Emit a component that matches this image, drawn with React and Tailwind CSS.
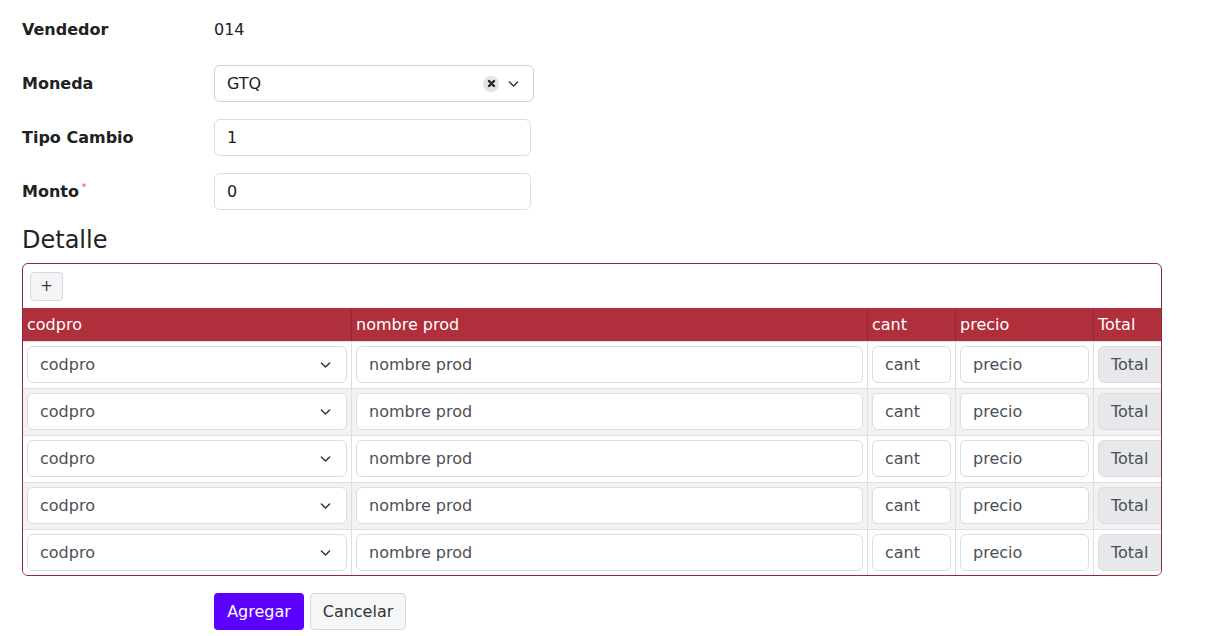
import React from "react";

const cols = [
  { key: "codpro", label: "codpro", w: "w-[328px]", type: "select" },
  { key: "nombre", label: "nombre prod", w: "w-[516px]", type: "input" },
  { key: "cant", label: "cant", w: "w-[88px]", type: "input" },
  { key: "precio", label: "precio", w: "w-[138px]", type: "input" },
  { key: "total", label: "Total", w: "w-[90px]", type: "readonly" },
];

function Chevron({ className }) {
  return (
    <svg viewBox="0 0 12 8" className={className} fill="none" stroke="currentColor" strokeWidth="1.6" strokeLinecap="round" strokeLinejoin="round">
      <path d="M1.5 1.8 6 6.2l4.5-4.4" />
    </svg>
  );
}

function FormRow({ label, required, children }) {
  return (
    <div className="flex items-center h-[37px] mb-[17px]">
      <div className="w-[192px] font-bold text-[16px] text-[#212121]">
        {label}
        {required && <span className="text-[#e57373] text-[8px] align-top ml-[3px] relative top-[2px]">*</span>}
      </div>
      {children}
    </div>
  );
}

function Cell({ col }) {
  const base = "h-[37px] w-full rounded-[6px] border border-[#dcdce0] px-[12px] text-[16px] flex items-center";
  if (col.type === "select") {
    return (
      <div className={base + " bg-white text-[#4b4f56] justify-between"}>
        <span>codpro</span>
        <Chevron className="w-[11px] h-[8px] text-[#333] mr-[3px]" />
      </div>
    );
  }
  if (col.type === "readonly") {
    return <div className={base + " bg-[#e7e8ec] text-[#4b4f56]"}>Total</div>;
  }
  return (
    <input
      placeholder={col.label}
      className={base + " bg-white outline-none placeholder:text-[#4b4f56] font-['DejaVu_Sans']"}
    />
  );
}

export default function App() {
  const rows = [0, 1, 2, 3, 4];
  return (
    <div className="px-[22px] pt-[11px] font-['DejaVu_Sans',sans-serif] text-[#212121] bg-white min-h-screen">
      <FormRow label="Vendedor">
        <span className="text-[16px]">014</span>
      </FormRow>
      <FormRow label="Moneda">
        <div className="w-[320px] h-[37px] rounded-[6px] border border-[#cfcfd6] flex items-center pl-[12px] pr-[14px]">
          <span className="flex-1 text-[16px]">GTQ</span>
          <span className="w-[16px] h-[16px] rounded-full bg-[#e3e3e3] flex items-center justify-center mr-[9px]">
            <svg viewBox="0 0 10 10" className="w-[9px] h-[9px]" stroke="#222" strokeWidth="2.6" strokeLinecap="round">
              <path d="M2.2 2.2l5.6 5.6M7.8 2.2 2.2 7.8" />
            </svg>
          </span>
          <Chevron className="w-[11px] h-[8px] text-[#333]" />
        </div>
      </FormRow>
      <FormRow label="Tipo Cambio">
        <input defaultValue="1" className="w-[317px] h-[37px] rounded-[6px] border border-[#dcdce0] px-[12px] text-[16px] outline-none font-['DejaVu_Sans']" />
      </FormRow>
      <FormRow label="Monto" required>
        <input defaultValue="0" className="w-[317px] h-[37px] rounded-[6px] border border-[#dcdce0] px-[12px] text-[16px] outline-none font-['DejaVu_Sans']" />
      </FormRow>

      <h2 className="text-[24px] leading-[29px] mt-[-1px] mb-[8px] text-[#222]">Detalle</h2>

      <div className="w-[1140px] border border-[#8c2a3a] rounded-[6px] overflow-hidden">
        <div className="h-[44px] flex items-center px-[7px]">
          <button className="w-[33px] h-[29px] rounded-[4px] border border-[#d6d8dc] bg-[#f4f5f7] text-[15px] text-[#333] flex items-center justify-center">+</button>
        </div>
        <div className="w-[1160px] flex h-[33px] bg-[#b02f3c] text-white text-[16px]">
          {cols.map((c, i) => (
            <div key={c.key} className={c.w + " flex items-center px-[4px] " + (i > 0 ? "border-l border-[#9a2533]" : "")}>
              {c.label}
            </div>
          ))}
        </div>
        {rows.map((r) => (
          <div key={r} className={"w-[1160px] flex border-t border-[#dfdfdf] " + (r % 2 === 1 ? "bg-[#f2f2f2]" : "bg-white")}>
            {cols.map((c, i) => (
              <div key={c.key} className={c.w + " pt-[4px] px-[4px] " + (r === 4 ? "pb-[4px] " : "pb-[5px] ") + (i > 0 ? "border-l border-[#dfdfdf]" : "")}>
                <Cell col={c} />
              </div>
            ))}
          </div>
        ))}
      </div>

      <div className="flex gap-[6px] mt-[17px] ml-[192px]">
        <button className="w-[90px] h-[37px] rounded-[4px] bg-[#5b00ff] text-white text-[16px]">Agregar</button>
        <button className="w-[96px] h-[37px] rounded-[4px] border border-[#d6d8dc] bg-[#f5f6f8] text-[#333] text-[16px]">Cancelar</button>
      </div>
    </div>
  );
}
